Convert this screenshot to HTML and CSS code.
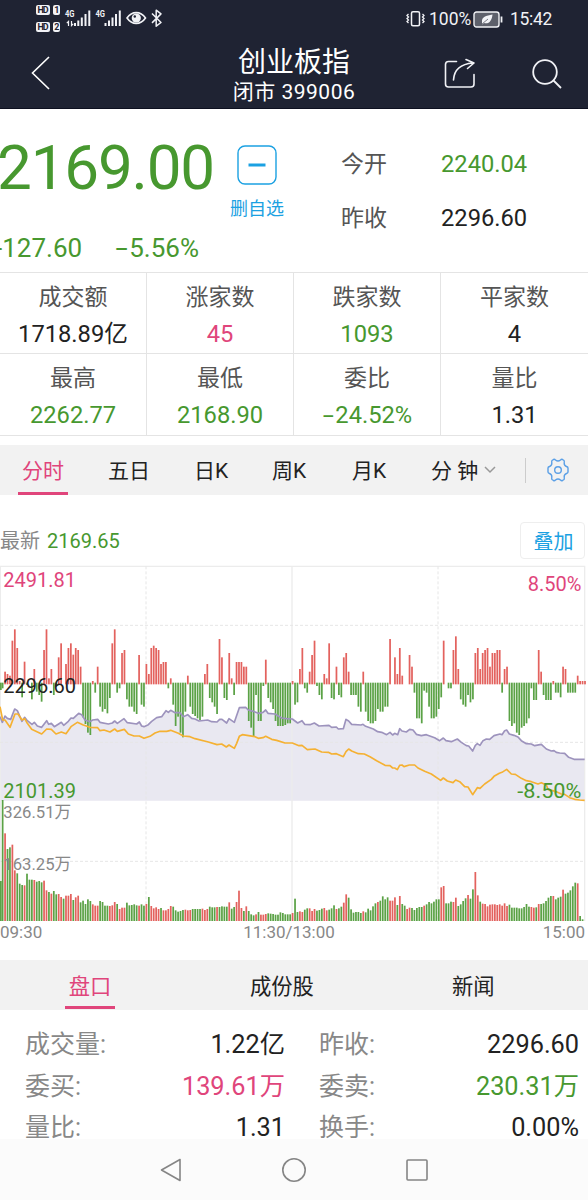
FILE: index.html
```html
<!DOCTYPE html>
<html lang="zh-CN">
<head>
    <meta charset="UTF-8">
    <meta name="viewport" content="width=device-width, initial-scale=1.0">
    <title>创业板指 399006</title>
    <link rel="stylesheet" href="styles.css">
</head>
<body>
    <header class="header">
        <div class="status-bar">
            <svg class="status-icons" width="130" height="36" viewBox="0 0 130 36">
                <g fill="#f1f2f6">
                    <rect x="0" y="5" width="14" height="10" rx="2"/>
                    <rect x="17" y="5" width="7" height="10" rx="2"/>
                    <rect x="0" y="22" width="14" height="10" rx="2"/>
                    <rect x="17" y="22" width="7" height="10" rx="2"/>
                </g>
                <g class="hd-text">
                    <text x="1.6" y="13.2" textLength="11">HD</text>
                    <text x="18.2" y="13.2">1</text>
                    <text x="1.6" y="30.2" textLength="11">HD</text>
                    <text x="18.2" y="30.2">2</text>
                </g>
                <g class="net-text">
                    <text x="29" y="17" textLength="9.500" lengthAdjust="spacingAndGlyphs">4G</text>
                    <text x="59.500" y="17" textLength="9.500" lengthAdjust="spacingAndGlyphs">4G</text>
                </g>
                <g stroke="#f1f2f6" fill="none" stroke-width="2">
                    <path d="M39 26v-3M42.300 26v-5.500M45.800 26v-8.500M49.500 26v-12M53.300 26v-15.500"/>
                    <path d="M69.500 26v-3M73 26v-5.500M76.500 26v-8.500M80 26v-12M83.800 26v-15.500"/>
                    <path stroke-width="1.200" d="M32.500 26v-4.500l-1.700 1.700M35.500 21v4.500l1.700-1.700"/>
                    <path stroke-width="1.600" d="M91 18c5-7.200 13.500-7.200 18.500 0c-5 7.200-13.500 7.200-18.500 0z"/>
                    <path stroke-width="1.500" stroke-linejoin="round" d="M116 13.500l9 9l-4.800 3.700v-16l4.800 3.700l-9 9"/>
                </g>
                <circle cx="100.300" cy="18" r="4.600" fill="#f1f2f6"/>
                <circle cx="98.800" cy="16.500" r="1.200" fill="#1f2333"/>
            </svg>
            <div class="status-right">
                <svg width="21" height="18" viewBox="0 0 21 18" fill="none" stroke="#f1f2f6" stroke-width="1.500">
                    <rect x="6.500" y="1.700" width="8" height="14" rx="1.500"/>
                    <path stroke-width="1.300" d="M3.500 4l-1.500 1.500l1.500 1.500l-1.500 1.500l1.500 1.500l-1.500 1.500l1.500 1.500M17.500 4l1.500 1.500l-1.500 1.500l1.500 1.500l-1.500 1.500l1.500 1.500l-1.500 1.500"/>
                </svg>
                <span class="battery-text">100%</span>
                <svg class="battery" width="31" height="17" viewBox="0 0 31 17">
                    <rect x="1" y="1" width="25" height="15" rx="2.500" fill="#5d606b" stroke="#f1f2f6" stroke-width="1.400"/>
                    <path d="M28.500 5.500v6" stroke="#f1f2f6" stroke-width="1.800"/>
                    <path d="M9 11c-.5-5 4-6.500 10.500-7.500c-.5 6-3.500 10-8.500 8.500l-2 1.500z" fill="#f1f2f6"/>
                    <path d="M9 13l6-5" stroke="#5d606b" stroke-width=".8"/>
                </svg>
                <span class="clock">15:42</span>
            </div>
        </div>
        <div class="title-bar">
            <svg class="back" width="20" height="36" viewBox="0 0 20 36" fill="none" stroke="#fff" stroke-width="1.600"><path d="M18 2L1.500 18L18 34"/></svg>
            <div class="title">
                <div class="title-name">创业板指</div>
                <div class="title-code">闭市 399006</div>
            </div>
            <svg class="share" width="32" height="32" viewBox="0 0 32 32" fill="none" stroke="#f1f2f6" stroke-width="1.600" stroke-linecap="round" stroke-linejoin="round">
                <path d="M12.500 3.500H4.500a3 3 0 0 0-3 3V26a3 3 0 0 0 3 3H27a3 3 0 0 0 3-3V16.500"/>
                <path d="M9.500 22c.5-9 6-16 19.500-17M22 1.500l8 3.500l-6.500 5.500"/>
            </svg>
            <svg class="search" width="30" height="30" viewBox="0 0 30 30" fill="none" stroke="#f1f2f6" stroke-width="1.800">
                <circle cx="13" cy="13" r="11.800"/>
                <path d="M21.500 21.500l7.500 7.500"/>
            </svg>
        </div>
    </header>

    <section class="quote">
        <div class="quote-left">
            <div class="price">2169.00</div>
            <div class="change"><span class="change-value">-127.60</span><span><i class="minus">-</i>5.56%</span></div>
        </div>
        <div class="favorite">
            <svg width="40" height="40" viewBox="0 0 40 40" fill="none" stroke="#1ba1e2">
                <rect x="1" y="1" width="38" height="38" rx="7" stroke-width="1.400"/>
                <path d="M11.500 20h17" stroke-width="3"/>
            </svg>
            <span>删自选</span>
        </div>
        <dl class="quote-right">
            <dt>今开</dt><dd class="green">2240.04</dd>
            <dt>昨收</dt><dd>2296.60</dd>
        </dl>
    </section>

    <section class="stats">
        <div class="stat"><span>成交额</span><b>1718.89亿</b></div>
        <div class="stat"><span>涨家数</span><b class="red">45</b></div>
        <div class="stat"><span>跌家数</span><b class="green">1093</b></div>
        <div class="stat"><span>平家数</span><b>4</b></div>
        <div class="stat"><span>最高</span><b class="green">2262.77</b></div>
        <div class="stat"><span>最低</span><b class="green">2168.90</b></div>
        <div class="stat"><span>委比</span><b class="green"><i class="minus">-</i>24.52%</b></div>
        <div class="stat"><span>量比</span><b>1.31</b></div>
    </section>

    <nav class="period-tabs">
        <a class="tab active">分时</a>
        <a class="tab">五日</a>
        <a class="tab">日K</a>
        <a class="tab">周K</a>
        <a class="tab">月K</a>
        <a class="tab minutes">分 钟
            <svg width="12" height="8" viewBox="0 0 12 8" fill="none" stroke="#999" stroke-width="1.500"><path d="M1 1l5 5l5-5"/></svg>
        </a>
        <span class="divider"></span>
        <svg class="gear" width="22" height="24" viewBox="0 0 22 24" fill="none" stroke="#5a9fe6" stroke-width="1.400" stroke-linejoin="round">
            <path d="M6.500 1.500Q7.500 1 8.500 2Q11 4 13.500 2Q14.500 1 15.500 1.500L17 2.500Q17.500 3 17.200 5Q17 7.500 19.500 8.500Q21 9 21 10V14Q21 15 19.500 15.500Q17 16.500 17.200 19Q17.500 21 17 21.500L15.500 22.500Q14.500 23 13.500 22Q11 20 8.500 22Q7.500 23 6.500 22.500L5 21.500Q4.500 21 4.800 19Q5 16.500 2.500 15.500Q1 15 1 14V10Q1 9 2.500 8.500Q5 7.500 4.800 5Q4.500 3 5 2.500Z"/>
            <circle cx="11" cy="12" r="3.300"/>
        </svg>
    </nav>

    <div class="latest">
        <span>最新</span><span class="green latest-value">2169.65</span>
        <button class="overlay-btn">叠加</button>
    </div>

    <svg class="chart" id="chart" width="588" height="362" viewBox="0 0 1764 1086"></svg>
    <div class="time-axis"><span>09:30</span><span class="midday">11:30/13:00</span><span>15:00</span></div>

    <nav class="info-tabs">
        <a class="tab active">盘口</a>
        <a class="tab">成份股</a>
        <a class="tab">新闻</a>
    </nav>

    <dl class="details">
        <dt>成交量:</dt><dd>1.22亿</dd>
        <dt>昨收:</dt><dd>2296.60</dd>
        <dt>委买:</dt><dd class="red">139.61万</dd>
        <dt>委卖:</dt><dd class="green">230.31万</dd>
        <dt>量比:</dt><dd>1.31</dd>
        <dt>换手:</dt><dd>0.00%</dd>
    </dl>

    <footer class="system-nav">
        <svg width="22" height="26" viewBox="0 0 22 26"><path d="M20 2.500v21L1.500 13z"/></svg>
        <svg width="26" height="26" viewBox="0 0 26 26"><circle cx="13" cy="13" r="11.200"/></svg>
        <svg width="22" height="24" viewBox="0 0 22 24"><rect x="1" y="2" width="20" height="20" rx="1"/></svg>
    </footer>

    <script src="chart.js"></script>
</body>
</html>
```
FILE: styles.css
```css
* {
    box-sizing: border-box;
}
body {
    margin: 0;
    width: 588px;
    height: 1200px;
    overflow: hidden;
    display: flex;
    flex-direction: column;
    background-color: #fff;
    color: #222;
    font-family: Roboto, "Noto Sans CJK SC", sans-serif;
}
body > * {
    flex-shrink: 0;
}
dl, dt, dd {
    margin: 0;
}
.red { color: #e0457b; }
.green { color: #47982f; }

/* The plain hyphen is too short next to figures */
.minus {
    display: inline-block;
    margin: 0 4px 0 3px;
    font-style: normal;
    transform: scaleX(1.7);
}

/* Header */
.header {
    height: 109px;
    background-color: #1f2333;
    border-bottom: 1px solid #0d1020;
    color: #fff;
}
.status-bar {
    height: 36px;
    padding: 0 36px;
    display: flex;
    justify-content: space-between;
}
.hd-text {
    font-size: 9px;
    font-weight: bold;
    fill: #1f2333;
}
.net-text {
    font-size: 9.5px;
    font-weight: bold;
    fill: #f1f2f6;
}
.status-right {
    display: flex;
    align-items: center;
    height: 38px;
    font-size: 17.5px;
    color: #f1f2f6;
}
.battery-text {
    margin-left: 3px;
    width: 44px;
}
.clock {
    width: 42px;
    margin-left: 6px;
    letter-spacing: -0.3px;
}
.title-bar {
    height: 72px;
    display: grid;
    grid-template-columns: 204px 180px 92px 86px 26px;
    align-items: center;
}
.back {
    margin-left: 31px;
    margin-top: 2px;
}
.title {
    text-align: center;
    align-self: start;
    padding-top: 9px;
}
.title-name {
    font-size: 28px;
    line-height: 35px;
}
.title-code {
    font-size: 21px;
    line-height: 25px;
    letter-spacing: 0.5px;
}
.share {
    justify-self: end;
    margin-top: 3px;
}
.search {
    justify-self: end;
    margin-top: 3px;
}

/* Price block */
.quote {
    height: 163px;
    display: flex;
}
.quote-left {
    width: 230px;
    color: #47982f;
}
.price {
    margin-left: -3px;
    padding-top: 22px;
    font-size: 62px;
    line-height: 74px;
    letter-spacing: -1.2px;
}
.change {
    display: flex;
    margin-top: 26px;
    font-size: 26px;
    line-height: 34px;
}
.change-value {
    margin-left: -5px;
    width: 120px;
}
.favorite {
    width: 54px;
    padding-top: 36px;
    display: flex;
    flex-direction: column;
    align-items: center;
    color: #1ba1e2;
    font-size: 18px;
    line-height: 26px;
    gap: 11px;
}
.quote-right {
    margin-left: 57px;
    padding-top: 28px;
    display: grid;
    grid-template-columns: 100px 100px;
    grid-auto-rows: 54px;
    align-content: start;
    font-size: 23.7px;
    line-height: 54px;
}
.quote-right dt {
    color: #555;
    font-size: 23px;
    line-height: 56px;
}

/* Stats table */
.stats {
    height: 164px;
    display: grid;
    grid-template-columns: repeat(4, 147px);
    grid-template-rows: 81px 82px;
    border-top: 1px solid #e4e4e4;
}
.stat {
    display: flex;
    flex-direction: column;
    align-items: center;
    padding-top: 6px;
    border-bottom: 1px solid #e4e4e4;
    border-right: 1px solid #e4e4e4;
    font-size: 23.7px;
    line-height: 37px;
}
.stat:nth-child(4n) {
    border-right: none;
}
.stat span {
    font-size: 23px;
    color: #555;
}
.stat b {
    font-weight: normal;
}

/* Tabs */
.period-tabs {
    height: 50px;
    margin-top: 9px;
    padding-left: 18px;
    display: grid;
    grid-template-columns: 72px 76px 91px 77px 85px 97px 20px 1fr;
    align-items: center;
    background-color: #f2f2f2;
    font-size: 21px;
    line-height: 53px;
}
.tab {
    height: 50px;
    white-space: nowrap;
}
.tab.active {
    width: 50px;
    text-align: center;
    color: #e0457b;
    border-bottom: 3px solid #e0457b;
}
.period-tabs .tab:nth-child(n+2) { padding-left: 18px; }
.period-tabs .tab:nth-child(n+3) { padding-left: 28px; }
.period-tabs .tab:nth-child(4) { padding-left: 15px; }
.period-tabs .tab:nth-child(5) { padding-left: 18px; }
.period-tabs .tab:nth-child(6) { padding-left: 12px; }
.minutes svg {
    margin-left: 1px;
    vertical-align: 4px;
}
.divider {
    width: 1px;
    height: 25px;
    margin-left: -20px;
    justify-self: center;
    background-color: #ccc;
}
.period-tabs .divider {
    margin-left: -2px;
}
.gear {
    margin-left: 11px;
}
.latest {
    height: 65px;
    padding: 26px 3px 0 0;
    display: flex;
    color: #888;
    font-size: 20px;
    line-height: 41px;
}
.latest-value {
    margin-left: 7px;
}
.overlay-btn {
    margin-left: auto;
    margin-top: 1px;
    width: 65px;
    height: 37px;
    padding: 0 0 0 2px;
    border: 1px solid #eee;
    border-radius: 4px;
    background-color: #fff;
    color: #1ba1e2;
    font: 20px Roboto, "Noto Sans CJK SC", sans-serif;
}

/* Chart */
.chart {
    display: block;
}
.grid { stroke: #ececec; stroke-width: 4; fill: none; }
.dashed { stroke: #e6e6e6; stroke-width: 3; stroke-dasharray: 9 6; }
.bar-up { fill: #e3625e; }
.bar-down { fill: #5ba246; }
.area { fill: #e9e8f1; }
.average { fill: none; stroke: #f5b133; stroke-width: 5; stroke-linejoin: round; }
.index { fill: none; stroke: #9d93bd; stroke-width: 5; stroke-linejoin: round; }
.label { font-size: 60px; }
.label-small { font-size: 50px; fill: #888; }
.label.up { fill: #e0457b; }
.label.down { fill: #47982f; }
.label.flat { fill: #222; }
.time-axis {
    height: 38px;
    padding-right: 3px;
    display: flex;
    justify-content: space-between;
    color: #888;
    font-size: 17px;
    line-height: 21px;
}
.midday {
    margin-right: 7px;
}

/* Details */
.info-tabs {
    height: 50px;
    padding-left: 65px;
    display: grid;
    grid-template-columns: 185px 202px 1fr;
    background-color: #f2f2f2;
    font-size: 21.3px;
    line-height: 53px;
}
.info-tabs .active {
    height: 49px;
}
.details {
    height: 129px;
    padding: 12px 9px 0 25px;
    display: grid;
    grid-template-columns: 100px 160px 94px 1fr;
    grid-auto-rows: 41.5px;
    font-size: 25.3px;
    line-height: 45px;
}
.details dt {
    color: #888;
    font-size: 25px;
}
.details dt:nth-of-type(2n) {
    padding-left: 34px;
    white-space: nowrap;
}
.details dd {
    text-align: right;
}
.system-nav {
    height: 61px;
    display: flex;
    justify-content: center;
    align-items: center;
    gap: 99px;
    background-color: #fbfbfb;
}
.system-nav svg {
    fill: none;
    stroke: #858585;
    stroke-width: 1.600;
    stroke-linejoin: round;
}
```
FILE: chart.js
```js
// One value per minute. Chart units are thirds of a pixel.
const STEP = 7.31;
const ZERO_Y = 370;
const AREA_BOTTOM = 722;
const VOLUME_BOTTOM = 1083;

// Momentum bars, positive goes up
const momentum = [
    -20, -15, 35, 28, 23, 128, 162, 106, 7, -42, 65, -5, 0, -48, 43, -25, -35, -55, 100, 162,
    15, 43, -35, -10, 78, 120, 0, 58, 106, 120, 86, 106, 100, 50, -102, -122, -148, -155, 7, -28,
    50, -70, -85, -77, -90, -44, 120, 162, -28, -15, 91, 100, -48, -70, -70, -85, -92, 85, -64, -70,
    58, 28, 106, 113, 106, 100, 58, 64, 64, -15, 15, -64, -128, -100, -148, -162, -85, 23, -70, -92,
    -98, -105, -110, -100, 28, 58, -44, -57, -70, -92, 133, 78, -44, -50, 91, 15, -35, 64, 64, 64,
    50, 50, -113, -133, -160, -35, -113, -113, -8, 71, -44, -57, -77, -113, -128, -128, -128, -125, -120, -120,
    7, -64, -57, 43, 106, -15, -28, 35, 85, 128, -8, -35, -48, 28, 15, 120, -44, -48, 50, -35,
    -42, 78, 91, 35, -35, -35, -35, -70, -85, 35, -85, -113, -120, -120, -113, -77, -85, -85, -70, -70,
    133, 0, 78, 28, 106, 23, 0, 0, 85, 50, -28, -105, -105, -120, -22, -28, -70, -105, -105, -100,
    -77, -42, 128, 0, -15, -15, 100, 141, 43, -48, -64, -70, -35, -57, -48, 91, 106, 43, 91, 100,
    106, 50, 91, 91, 100, 100, -28, 43, 50, -113, -128, -120, -148, -155, -133, -128, -120, -105, -15, -50,
    -50, 100, 35, -35, -50, -50, -50, 7, -28, -28, -42, 50, 43, -28, -28, -28, -28, 23, 7, 7, 7
];

// Volume per minute, negative marks a falling minute
const volume = [
    -120, -363, 263, -216, -221, 229, 152, -143, -112, -108, 107, -142, -124, -124, 123, -118, -120, -116, 121, 92,
    -87, 82, -90, -80, 81, 72, -67, 76, 76, 81, -63, 71, 76, -56, -61, -51, -65, -60, 50, 46,
    46, -60, -57, -46, -46, 45, 47, 57, -51, 36, 40, 40, -55, -47, -48, -50, -47, 46, -50, -46,
    51, -72, 45, 38, 41, 36, -39, 32, 32, 36, 45, -43, -32, -28, -30, -33, 34, 32, 33, -36,
    -36, -36, -36, 37, 33, 36, -43, -41, -41, 42, -42, -44, -43, -43, 56, -37, -42, 57, 91, 39,
    -30, 44, -30, -20, -17, 20, -27, 19, 19, 21, -23, -22, -21, -19, -19, -26, -24, -20, -20, -20,
    24, -67, -27, 29, 27, -34, -38, 38, 30, 36, -31, -33, -37, 39, 32, -34, -38, -47, 36, -38,
    -43, 55, 80, -70, -35, -25, -27, -27, -24, 29, -26, -37, -32, -44, -53, 57, -61, -74, -65, -71,
    61, 61, 71, -48, 75, -51, -46, 36, 40, -39, -33, -39, -42, -42, 46, -50, -57, -53, -58, -65,
    -65, 101, 105, -53, -53, -58, 57, 70, -45, -50, -60, -68, 78, -67, -95, 147, 77, -58, 52, 51,
    44, 49, 50, 50, 48, 50, 46, 53, 45, -49, -40, -40, -40, -38, -38, -42, -51, -43, 42, 40,
    -41, 51, -51, -53, -60, -70, -75, 75, -65, -70, -73, 94, -82, -85, -92, -104, -115, 113, -15, -5
];

const indexLine = "0,470 7,487 15,468 22,475 32,478 44,447 52,452 66,484 74,472 82,482 96,493 103,487 112,498 125,502 140,482 146,493 154,490 163,500 184,487 191,496 205,484 213,474 220,475 236,460 245,464 255,480 270,485 278,480 293,478 300,487 325,492 337,489 344,483 352,490 372,476 382,488 410,492 418,486 425,498 432,500 445,494 455,484 470,473 485,470 498,452 505,457 512,451 525,458 540,458 550,470 563,464 575,475 585,477 "
    + "597,483 623,480 635,485 651,486 659,478 666,478 680,489 687,476 703,487 718,443 737,442 745,450 760,454 775,460 789,457 797,450 804,460 825,462 845,474 860,476 877,477 893,489 906,482 914,493 930,494 943,489 957,498 987,496 995,502 1009,501 1015,507 1030,506 1038,478 1046,483 1055,493 1083,495 1089,493 1097,499 1120,507 1133,515 1145,517 1160,524 "
    + "1170,517 1178,525 1184,520 1193,524 1199,506 1206,513 1219,516 1229,508 1239,510 1249,523 1264,527 1279,524 1304,533 1319,542 1330,534 1338,542 1354,545 1372,537 1384,547 1399,557 1406,558 1418,573 1426,556 1432,551 1440,556 1449,542 1459,537 1469,538 1482,527 1500,522 1506,524 1514,512 1520,510 1528,522 1542,526 1554,531 1564,542 1579,551 1594,552 1604,557 1624,553 1639,567 1654,573 1662,572 1669,577 1679,579 1694,580 1706,592 1722,598 1754,598";

const averageLine = "0,440 8,480 15,480 30,502 45,462 54,462 66,480 74,476 82,490 95,508 125,522 140,507 154,508 168,522 184,516 198,521 213,500 232,487 250,495 270,502 293,503 300,512 312,510 330,516 344,507 352,514 373,508 385,522 402,528 418,528 432,535 450,529 465,519 480,514 500,514 512,511 535,520 550,528 570,530 585,536 "
    + "625,546 651,554 665,552 679,561 687,555 703,565 710,550 718,529 727,524 765,530 775,535 789,533 797,529 815,538 830,541 855,549 877,549 897,557 906,556 922,569 945,567 965,576 985,577 995,582 1009,581 1030,590 1038,575 1046,567 1055,573 1075,581 1093,582 1110,590 1130,602 1155,616 "
    + "1170,617 1178,624 1184,624 1192,629 1199,616 1206,615 1212,620 1228,615 1244,615 1254,624 1274,634 1294,642 1322,661 1330,654 1342,663 1359,668 1367,660 1379,665 1394,680 1404,681 1418,704 1432,683 1440,685 1454,672 1474,658 1482,649 1498,640 1506,637 1514,632 1520,628 1534,642 1546,643 1564,655 1579,662 1594,665 1614,672 1624,668 1639,675 1644,688 1669,695 1684,702 1694,703 1709,713 1724,718 1739,720 1754,721";

function bar(i, top, height, up) {
    const x = Math.max(0, i * STEP - 2);
    return `<rect class="${up ? "bar-up" : "bar-down"}" x="${x}" y="${top}" width="5.2" height="${height}"/>`;
}

let momentumBars = "";
momentum.forEach((v, i) => {
    if (v > 0) momentumBars += bar(i, ZERO_Y - v, v + 3, true);
    if (v < 0) momentumBars += bar(i, ZERO_Y - 2, 2 - v, false);
});

let volumeBars = "";
volume.forEach((v, i) => {
    volumeBars += bar(i, VOLUME_BOTTOM - Math.abs(v), Math.abs(v), v > 0);
});

document.getElementById("chart").innerHTML = `
    <polygon class="area" points="0,${AREA_BOTTOM} ${indexLine} 1754,${AREA_BOTTOM}"/>
    <path class="grid" d="M1 ${VOLUME_BOTTOM}V19H1754V${VOLUME_BOTTOM}M876 19V${VOLUME_BOTTOM}"/>
    <path class="grid dashed" d="M438 19V${VOLUME_BOTTOM}M1314 19V${VOLUME_BOTTOM}M0 196H1754M0 547H1754M0 904H1754"/>
    ${momentumBars}
    ${volumeBars}
    <polyline class="index" points="${indexLine}"/>
    <polyline class="average" points="${averageLine}"/>
    <text class="label up" x="10" y="80">2491.81</text>
    <text class="label flat" x="10" y="400">2296.60</text>
    <text class="label down" x="10" y="714">2101.39</text>
    <text class="label up" x="1744" y="92" text-anchor="end">8.50%</text>
    <text class="label down" x="1744" y="714" text-anchor="end" textLength="192" lengthAdjust="spacingAndGlyphs">-8.50%</text>
    <text class="label-small" x="10" y="774">326.51万</text>
    <text class="label-small" x="10" y="930">163.25万</text>
`;
```
